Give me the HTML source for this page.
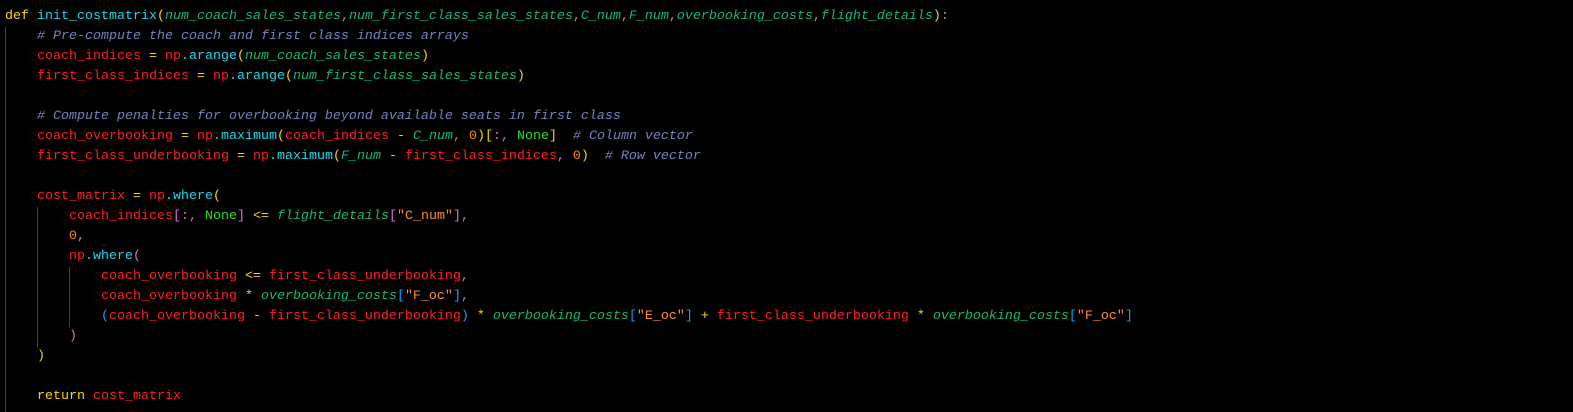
<!DOCTYPE html>
<html><head><meta charset="utf-8"><style>
html,body{margin:0;padding:0;background:#000;width:1573px;height:412px;overflow:hidden}
pre{margin:0;position:absolute;left:5px;top:7px;font-family:"Liberation Mono",monospace;font-size:13.33px;line-height:20px;color:#ff2020;white-space:pre}
.k{color:#ffd700}.f{color:#1ed8f0}.p{color:#18b870;font-style:italic}.c{color:#7880c0;font-style:italic}
.o{color:#ffd700}.n{color:#ff8c00}.s{color:#ff8c30}.y{color:#ffd700}.m{color:#da70d6}.b{color:#179fff}.g{color:#20e020}
.g1{position:absolute;width:1px;background:#404040}
</style></head><body>
<div class="g1" style="left:5px;top:27px;height:385px"></div>
<div class="g1" style="left:37px;top:207px;height:140px"></div>
<div class="g1" style="left:69px;top:267px;height:60px"></div>
<pre><span class="k">def</span> <span class="f">init_costmatrix</span><span class="y">(</span><span class="p">num_coach_sales_states</span><span class="m">,</span><span class="p">num_first_class_sales_states</span><span class="m">,</span><span class="p">C_num</span><span class="m">,</span><span class="p">F_num</span><span class="m">,</span><span class="p">overbooking_costs</span><span class="m">,</span><span class="p">flight_details</span><span class="y">)</span><span class="m">:</span>
    <span class="c"># Pre-compute the coach and first class indices arrays</span>
    coach_indices <span class="o">=</span> np<span class="f">.arange</span><span class="y">(</span><span class="p">num_coach_sales_states</span><span class="y">)</span>
    first_class_indices <span class="o">=</span> np<span class="f">.arange</span><span class="y">(</span><span class="p">num_first_class_sales_states</span><span class="y">)</span>

    <span class="c"># Compute penalties for overbooking beyond available seats in first class</span>
    coach_overbooking <span class="o">=</span> np<span class="f">.maximum</span><span class="y">(</span>coach_indices <span class="o">-</span> <span class="p">C_num</span><span class="m">,</span> <span class="n">0</span><span class="y">)[</span><span class="m">:,</span> <span class="g">None</span><span class="y">]</span>  <span class="c"># Column vector</span>
    first_class_underbooking <span class="o">=</span> np<span class="f">.maximum</span><span class="y">(</span><span class="p">F_num</span> <span class="o">-</span> first_class_indices<span class="m">,</span> <span class="n">0</span><span class="y">)</span>  <span class="c"># Row vector</span>

    cost_matrix <span class="o">=</span> np<span class="f">.where</span><span class="y">(</span>
        coach_indices<span class="m">[:,</span> <span class="g">None</span><span class="m">]</span> <span class="o">&lt;=</span> <span class="p">flight_details</span><span class="m">[</span><span class="s">"C_num"</span><span class="m">]</span><span class="m">,</span>
        <span class="n">0</span><span class="m">,</span>
        np<span class="f">.where</span><span class="m">(</span>
            coach_overbooking <span class="o">&lt;=</span> first_class_underbooking<span class="m">,</span>
            coach_overbooking <span class="o">*</span> <span class="p">overbooking_costs</span><span class="b">[</span><span class="s">"F_oc"</span><span class="b">]</span><span class="m">,</span>
            <span class="b">(</span>coach_overbooking <span class="o">-</span> first_class_underbooking<span class="b">)</span> <span class="o">*</span> <span class="p">overbooking_costs</span><span class="b">[</span><span class="s">"E_oc"</span><span class="b">]</span> <span class="o">+</span> first_class_underbooking <span class="o">*</span> <span class="p">overbooking_costs</span><span class="b">[</span><span class="s">"F_oc"</span><span class="b">]</span>
        <span class="m">)</span>
    <span class="y">)</span>

    <span class="k">return</span> cost_matrix</pre>
</body></html>
